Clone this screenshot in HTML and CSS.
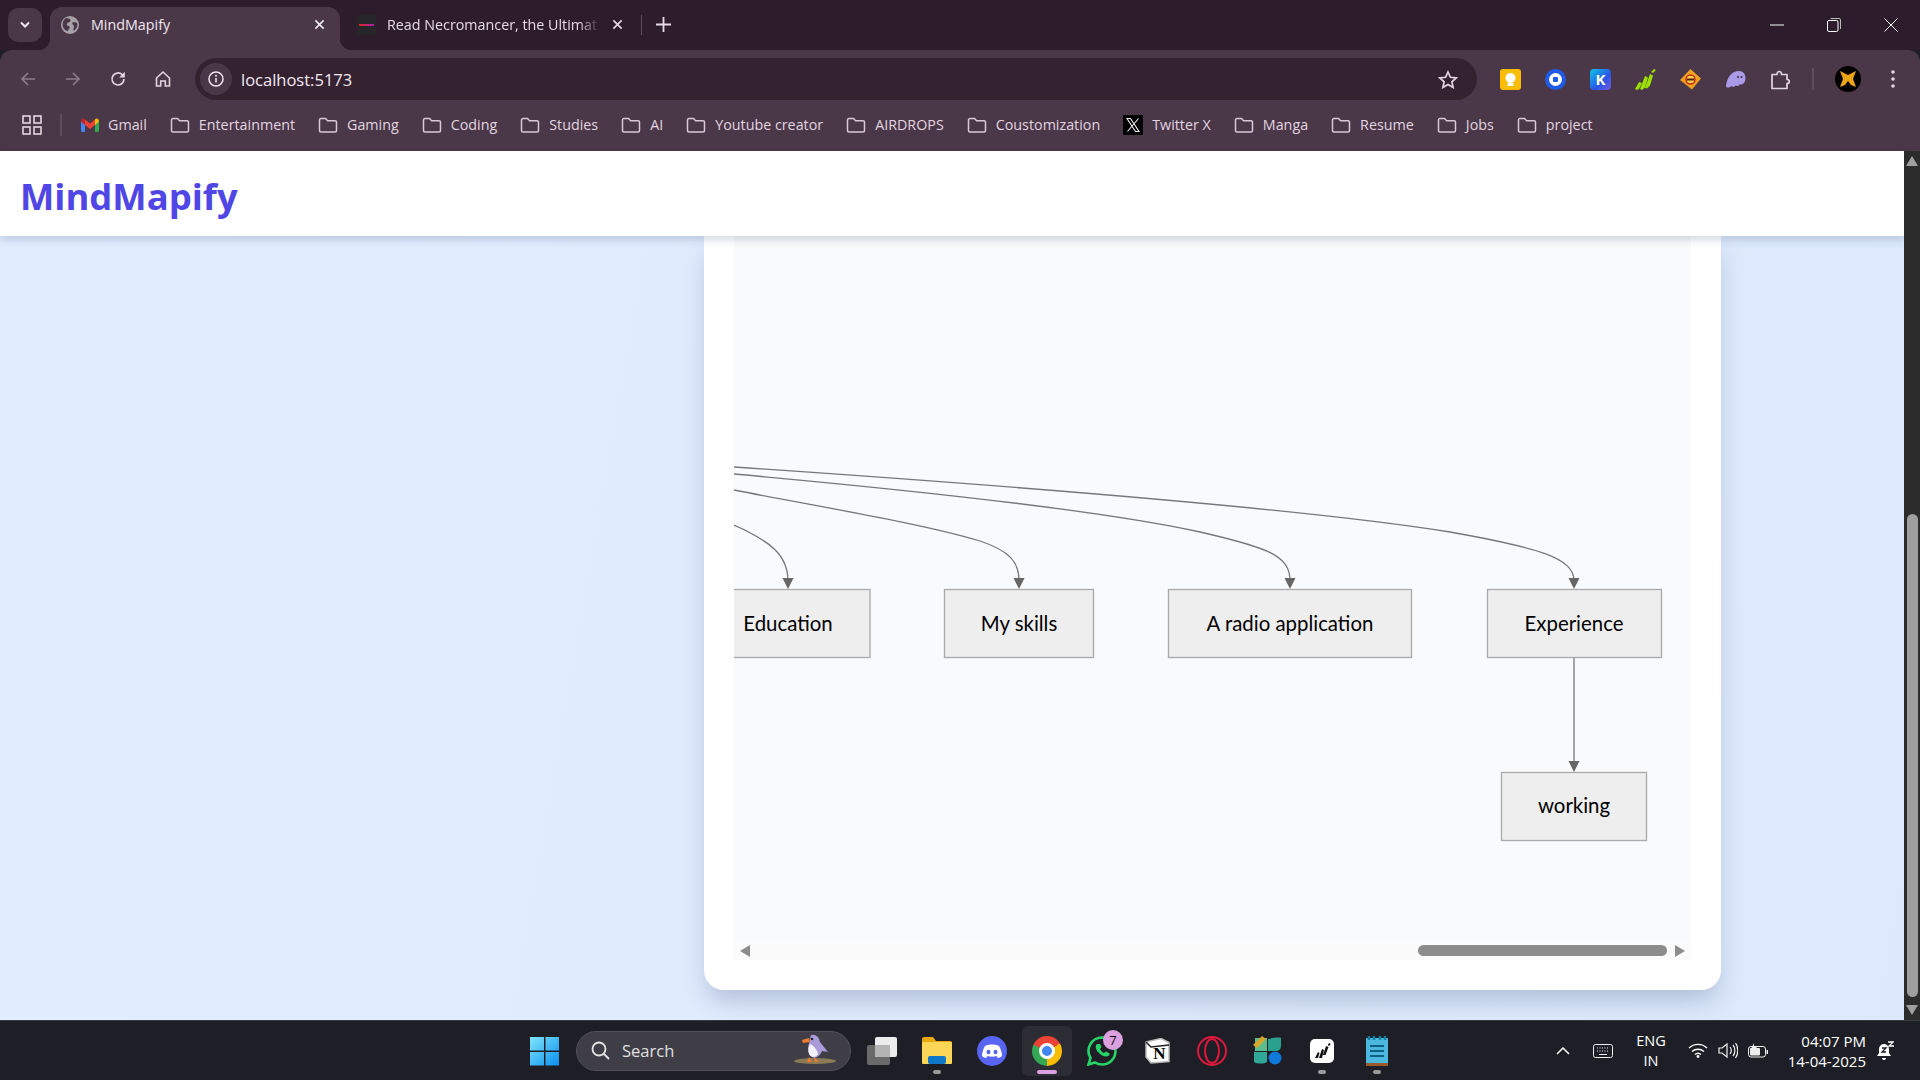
FILE: index.html
```html
<!DOCTYPE html>
<html lang="en">
<head>
  <meta charset="UTF-8">
  <meta name="viewport" content="width=device-width, initial-scale=1.0">
  <title>MindMapify</title>
  <link rel="stylesheet" href="styles.css">
</head>
<body>
  <svg class="sprite" aria-hidden="true">
    <symbol id="folder" viewBox="0 0 20 16">
      <path d="M1.5 3a1.5 1.5 0 0 1 1.5-1.5h4.6l2 2.2H17a1.5 1.5 0 0 1 1.5 1.5v8.3a1.5 1.5 0 0 1-1.5 1.5H3a1.5 1.5 0 0 1-1.5-1.5z" fill="none" stroke="#d9c8d6" stroke-width="1.5"/>
    </symbol>
  </svg>

  <div class="screen">
    <!-- tab strip -->
    <div class="tabstrip">
      <div class="tab-menu">
        <svg width="12" height="8" viewBox="0 0 12 8"><path d="M2 1.5l4 4 4-4" fill="none" stroke="#f1e6ef" stroke-width="2"/></svg>
      </div>
      <div class="tab tab-active">
        <svg class="tab-icon" width="18" height="18" viewBox="0 0 17 17"><circle cx="8.5" cy="8.5" r="8.5" fill="#a7a1a8"/><path d="M5 2c2 0 4 1 4 2.500S6 6 5.500 7.500 7 9 8 10s-1 3-2 4.500C3 13 1.500 11 1.500 8S3 3 5 2zM11 6c2-.5 3.500 0 4.500 1 .2 3-1 5.500-3.500 7-1-2 1-3.500 0-5s-2-2-1-3z" fill="#4a3748"/></svg>
        <span class="tab-title">MindMapify</span>
        <svg class="tab-close" width="11" height="11" viewBox="0 0 12 12"><path d="M1.500 1.500l9 9m0-9l-9 9" stroke="#f4ecf3" stroke-width="1.700"/></svg>
      </div>
      <div class="tab tab-idle">
        <span class="favicon-book"><i></i></span>
        <span class="tab-title tab-title-fade">Read Necromancer, the Ultimat</span>
        <svg class="tab-close" width="11" height="11" viewBox="0 0 12 12"><path d="M1.500 1.500l9 9m0-9l-9 9" stroke="#e6dae4" stroke-width="1.700"/></svg>
      </div>
      <span class="tab-sep"></span>
      <svg class="tab-new" width="15" height="15" viewBox="0 0 14 14"><path d="M7 0v14M0 7h14" stroke="#e6dae4" stroke-width="1.700"/></svg>
      <div class="win-buttons">
        <svg width="14" height="14" viewBox="0 0 14 14"><path d="M0 7h14" stroke="#fff" stroke-width="1"/></svg>
        <svg width="14" height="14" viewBox="0 0 14 14"><rect x=".5" y="2.500" width="10.500" height="11" rx="1.500" fill="none" stroke="#fff"/><path d="M3.500.5H12a1.500 1.500 0 0 1 1.500 1.500v9" fill="none" stroke="#bbb"/></svg>
        <svg width="14" height="14" viewBox="0 0 14 14"><path d="M.5.5l13 13m0-13l-13 13" stroke="#fff" stroke-width="1"/></svg>
      </div>
    </div>

    <!-- address bar -->
    <div class="toolbar">
      <div class="nav-icons">
        <svg width="18" height="18" viewBox="0 0 18 18"><path d="M16 9H3m6-6L3 9l6 6" fill="none" stroke="#8c7c8a" stroke-width="1.700"/></svg>
        <svg width="18" height="18" viewBox="0 0 18 18"><path d="M2 9h13M9 3l6 6-6 6" fill="none" stroke="#8c7c8a" stroke-width="1.700"/></svg>
        <svg width="18" height="18" viewBox="0 0 18 18"><path d="M15 9a6 6 0 1 1-1.800-4.300L15 6.500" fill="none" stroke="#e3d5e0" stroke-width="1.700"/><path d="M15.800 1.800v5.600h-5.600z" fill="#e3d5e0"/></svg>
        <svg width="18" height="18" viewBox="0 0 18 18"><path d="M2.500 8L9 2l6.500 6v8h-4.200v-5H6.700v5H2.500z" fill="none" stroke="#e3d5e0" stroke-width="1.600"/></svg>
      </div>
      <div class="omnibox">
        <span class="info-chip">
          <svg width="16" height="16" viewBox="0 0 16 16"><circle cx="8" cy="8" r="7" fill="none" stroke="#f0e4ee" stroke-width="1.500"/><path d="M8 7v4.500" stroke="#f0e4ee" stroke-width="1.600"/><circle cx="8" cy="4.700" r="1" fill="#f0e4ee"/></svg>
        </span>
        <span class="url">localhost:5173</span>
        <svg class="star" width="20" height="19" viewBox="0 0 20 19"><path d="M10 2l2.400 5.300 5.800.6-4.300 3.900 1.200 5.700L10 14.600l-5.100 2.900 1.200-5.700L1.800 7.900l5.800-.6z" fill="none" stroke="#e3d5e0" stroke-width="1.700"/></svg>
      </div>
      <div class="ext-icons">
        <svg width="21" height="21" viewBox="0 0 21 21"><rect width="21" height="21" rx="3" fill="#fbbc04"/><circle cx="10.500" cy="9" r="5" fill="#fff"/><rect x="7.500" y="14" width="6" height="3" fill="#fff"/></svg>
        <svg width="21" height="21" viewBox="0 0 21 21"><circle cx="10.500" cy="10.500" r="10.500" fill="#1f5ae8"/><circle cx="10.500" cy="10.500" r="6.500" fill="#fff"/><rect x="8" y="8" width="5" height="5" rx="1" fill="#1f5ae8"/></svg>
        <svg class="ext-k" width="21" height="21" viewBox="0 0 21 21"><defs><linearGradient id="kgrad" x1="0" y1="0" x2="1" y2="1"><stop offset="0" stop-color="#0bc5ea"/><stop offset=".6" stop-color="#2a55e5"/><stop offset="1" stop-color="#7a5ae0"/></linearGradient></defs><rect width="21" height="21" rx="4" fill="url(#kgrad)"/><text x="10.500" y="15.500" class="k-letter">K</text></svg>
        <svg width="21" height="21" viewBox="0 0 21 21"><path d="M0 20l4-7 3 1-3 6-2 1zM5 20l5-13 3 1.500-3 10-3 2.500zM10 19l5-14 3 1.500-3 10-3 3zM16 3l3-3 2 1-3 3z" fill="#9be000"/></svg>
        <svg width="21" height="21" viewBox="0 0 21 21"><path d="M10.500 0l10.500 9.500-9 11L0 11z" fill="#f0a21f"/><circle cx="10.500" cy="10.500" r="4.500" fill="#f9d24a" stroke="#c6281c" stroke-width="1.500"/><path d="M7 10.500h7" stroke="#521" stroke-width="2"/></svg>
        <svg width="21" height="21" viewBox="0 0 21 21"><path d="M1 17C2 8 7 2 14 2c4 0 6.500 3 6.500 7 0 5-3 7-6 6.500-1 2-3 1.500-4 1-1.500 2-3 1.500-4 .5-1.500 1.500-5 2.500-5.500.5z" fill="#ab9ae8"/><circle cx="13" cy="8" r="1.100" fill="#4a3748"/><circle cx="16.500" cy="8" r="1.100" fill="#4a3748"/></svg>
        <svg width="21" height="21" viewBox="0 0 21 21"><path d="M2 5.500h5c0-4 4.500-4 4.500 0h5.500v5c3 0 3 4 0 4v5H2z" fill="none" stroke="#e3d5e0" stroke-width="1.700" stroke-linejoin="round"/></svg>
        <span class="ext-sep"></span>
        <svg class="profile" width="26" height="26" viewBox="0 0 26 26"><circle cx="13" cy="13" r="13" fill="#000"/><path d="M5 5l8 4 8-4-3 8 3 8-5-2-3-4-3 4-5 2 3-8z" fill="#eda515"/></svg>
        <svg class="dots" width="4" height="18" viewBox="0 0 4 18"><circle cx="2" cy="2" r="1.800" fill="#e3d5e0"/><circle cx="2" cy="9" r="1.800" fill="#e3d5e0"/><circle cx="2" cy="16" r="1.800" fill="#e3d5e0"/></svg>
      </div>
    </div>

    <!-- bookmarks -->
    <div class="bookmarks">
      <svg class="bm-apps" width="20" height="20" viewBox="0 0 20 20"><g fill="none" stroke="#e3d5e0" stroke-width="1.600"><rect x="1" y="1" width="7" height="7"/><rect x="12" y="1" width="7" height="7"/><rect x="1" y="12" width="7" height="7"/><rect x="12" y="12" width="7" height="7"/></g></svg>
      <span class="bm-sep"></span>
      <div class="bm-list">
        <span class="bm"><svg width="18" height="14" viewBox="0 0 18 14"><path d="M0 3v9.500A1.500 1.500 0 0 0 1.500 14H4V6z" fill="#4285f4"/><path d="M14 6v8h2.500a1.500 1.500 0 0 0 1.500-1.500V3z" fill="#34a853"/><path d="M4 7V1.500L9 5.500l5-4V7L9 11z" fill="#ea4335"/><path d="M0 3.500C0 .8 2.500-.5 4 1.500V7z" fill="#c5221f"/><path d="M14 1.500c1.500-2 4-.7 4 2L14 7z" fill="#fbbc04"/></svg>Gmail</span>
        <span class="bm"><svg class="bm-folder"><use href="#folder"/></svg>Entertainment</span>
        <span class="bm"><svg class="bm-folder"><use href="#folder"/></svg>Gaming</span>
        <span class="bm"><svg class="bm-folder"><use href="#folder"/></svg>Coding</span>
        <span class="bm"><svg class="bm-folder"><use href="#folder"/></svg>Studies</span>
        <span class="bm"><svg class="bm-folder"><use href="#folder"/></svg>AI</span>
        <span class="bm"><svg class="bm-folder"><use href="#folder"/></svg>Youtube creator</span>
        <span class="bm"><svg class="bm-folder"><use href="#folder"/></svg>AIRDROPS</span>
        <span class="bm"><svg class="bm-folder"><use href="#folder"/></svg>Coustomization</span>
        <span class="bm"><svg width="20" height="20" viewBox="0 0 20 20"><rect width="20" height="20" fill="#000"/><path d="M4 3.500h3.500l8.500 13h-3.500zM15.500 3.500L4.500 16.500" fill="none" stroke="#eee" stroke-width="1.100"/></svg>Twitter X</span>
        <span class="bm"><svg class="bm-folder"><use href="#folder"/></svg>Manga</span>
        <span class="bm"><svg class="bm-folder"><use href="#folder"/></svg>Resume</span>
        <span class="bm"><svg class="bm-folder"><use href="#folder"/></svg>Jobs</span>
        <span class="bm"><svg class="bm-folder"><use href="#folder"/></svg>project</span>
      </div>
    </div>

    <!-- page -->
    <div class="viewport">
      <div class="page">
        <header class="site-header">
          <h1 class="logo">MindMapify</h1>
        </header>
        <main class="content">
          <section class="card">
            <div class="diagram-panel">
              <svg class="diagram" width="957" height="705" viewBox="734 236 957 705">
                <g class="edges">
                  <path d="M734 467C1000 485 1300 508 1450 532C1540 548 1574 558 1574 581"/>
                  <path d="M734 474C900 489 1100 510 1200 532C1270 548 1290 556 1290 581"/>
                  <path d="M734 490C820 507 920 523 980 541C1010 551 1019 562 1019 581"/>
                  <path d="M734 525C770 541 788 555 788 581"/>
                  <path d="M1574 658V764"/>
                </g>
                <g class="heads">
                  <path d="M782.500 578h11l-5.500 11z"/>
                  <path d="M1013.500 578h11l-5.500 11z"/>
                  <path d="M1284.500 578h11l-5.500 11z"/>
                  <path d="M1568.500 578h11l-5.500 11z"/>
                  <path d="M1568.500 761h11l-5.500 11z"/>
                </g>
                <g class="nodes">
                  <rect x="706" y="589.500" width="164" height="68"/>
                  <rect x="944.500" y="589.500" width="149" height="68"/>
                  <rect x="1168.500" y="589.500" width="243" height="68"/>
                  <rect x="1487.500" y="589.500" width="174" height="68"/>
                  <rect x="1501.500" y="772.500" width="145" height="68"/>
                </g>
                <g class="labels">
                  <text x="788" y="631">Education</text>
                  <text x="1019" y="631">My skills</text>
                  <text x="1290" y="631">A radio application</text>
                  <text x="1574" y="631">Experience</text>
                  <text x="1574" y="813">working</text>
                </g>
              </svg>
            </div>
            <div class="hscroll">
              <span class="arrow-left"></span>
              <span class="hthumb"></span>
              <span class="arrow-right"></span>
            </div>
          </section>
        </main>
      </div>
      <div class="vscroll">
        <span class="arrow-up"></span>
        <span class="vthumb"></span>
        <span class="arrow-down"></span>
      </div>
    </div>

    <!-- windows taskbar -->
    <footer class="taskbar">
      <div class="task-center">
        <span class="slot"><svg width="30" height="30" viewBox="0 0 30 30"><defs><linearGradient id="wingrad" x1="0" y1="0" x2="1" y2="1"><stop offset="0" stop-color="#7fe6fb"/><stop offset="1" stop-color="#0a8ff0"/></linearGradient></defs><path d="M0 1h14v13.500H0zM15.500 1H29v13.500H15.500zM0 16h14v13.500H0zM15.500 16H29v13.500H15.500z" fill="url(#wingrad)"/></svg></span>
        <div class="search-pill">
          <svg width="19" height="19" viewBox="0 0 19 19"><circle cx="8" cy="8" r="6.500" fill="none" stroke="#e5e5e5" stroke-width="1.800"/><path d="M13 13l5 5" stroke="#e5e5e5" stroke-width="1.800"/></svg>
          <span class="search-label">Search</span>
          <svg class="search-bird" width="42" height="32" viewBox="0 0 42 32"><ellipse cx="21" cy="28" rx="21" ry="3" fill="#8b7a55"/><path d="M17 2c5-1 8 2 9 7l8 10-6-1c-2 5-6 8-10 6-5-3-4-10-3-14z" fill="#a99ad8"/><path d="M16 11c3 1 7 5 8 10-2 4-7 4-9 0-1-3-1-7 1-10z" fill="#f2f0f8"/><circle cx="18" cy="6" r="1.200" fill="#222"/><path d="M15 5L8 7l1 3 7-1z" fill="#ee7b2c"/><path d="M15 24l-2 5h5zM20 24l1 5h4z" fill="#ee7b2c"/></svg>
        </div>
        <span class="slot"><svg width="30" height="28" viewBox="0 0 30 28"><rect y="8" width="23" height="20" rx="2" fill="#6a6a6a"/><rect x="8" width="22" height="20" rx="2" fill="#ececec"/><rect x="8" y="8" width="15" height="12" fill="#b4b4b4"/></svg></span>
        <span class="slot slot-running"><svg width="30" height="27" viewBox="0 0 30 27"><path d="M0 2a2 2 0 0 1 2-2h9l3 4h14a2 2 0 0 1 2 2v4H0z" fill="#e8a90f"/><rect y="5" width="30" height="22" rx="1" fill="#fcd757"/><rect x="6" y="19" width="18" height="8" rx="2" fill="#0f78c8"/></svg></span>
        <span class="slot"><svg width="30" height="30" viewBox="0 0 30 30"><circle cx="15" cy="15" r="15" fill="#5865f2"/><path d="M8 10c4-2 10-2 14 0 2 3 3 7 3 10-2 1.500-3 2-4 2l-1.500-2c-3 1-6 1-9 0L9 22c-1 0-2-.5-4-2 0-3 1-7 3-10z" fill="#fff"/><ellipse cx="11.500" cy="16" rx="2" ry="2.300" fill="#5865f2"/><ellipse cx="18.500" cy="16" rx="2" ry="2.300" fill="#5865f2"/></svg></span>
        <span class="slot slot-active">
          <span class="chrome-logo"><i></i></span>
        </span>
        <span class="slot slot-badge">
          <svg width="30" height="30" viewBox="0 0 30 30"><path d="M15 1.500a13.500 13.500 0 0 1 0 27c-2.500 0-5-.7-7-2L1.500 28.500 3.500 22A13.500 13.500 0 0 1 15 1.500z" fill="none" stroke="#25d366" stroke-width="2.600"/><path d="M10 8c-2 2-1.500 5 1 8s6 5 9 4.500c2-.5 3-2 2.500-3L19 15.500l-2 1.500c-1.500-.5-3.500-2.500-4-4l1.500-2L13 8z" fill="#25d366"/></svg>
          <span class="badge">7</span>
        </span>
        <span class="slot"><svg width="25" height="26" viewBox="0 0 25 26"><path d="M1 4l15-3.500 8 4v19L6 25 1 19z" fill="#fff" stroke="#bbb" stroke-width="1.500"/><path d="M1 4l5 5 18-2" fill="none" stroke="#222" stroke-width="1.500"/><text x="14.500" y="21" class="notion-letter">N</text></svg></span>
        <span class="slot"><svg width="30" height="30" viewBox="0 0 30 30"><ellipse cx="15" cy="15" rx="14" ry="14" fill="none" stroke="#e0183c" stroke-width="2"/><ellipse cx="15" cy="15" rx="7" ry="12" fill="none" stroke="#e0183c" stroke-width="2"/></svg></span>
        <span class="slot"><svg width="29" height="29" viewBox="0 0 29 29"><path d="M2 2h12v13H2z" fill="#5bbd8e"/><path d="M15 3c4-1 12-2 13-1v8c0 3-2 5-5 5h-8z" fill="#2aa08f"/><path d="M1 16h13v10c-3 2-10 2-13 0z" fill="#30a898"/><circle cx="22" cy="22" r="6.500" fill="#0f78d8"/><path d="M0 9L9 0l4 3-9 9z" fill="#d6a72c"/></svg></span>
        <span class="slot slot-running"><svg width="24" height="24" viewBox="0 0 24 24"><rect width="24" height="24" rx="5" fill="#fff"/><path d="M5 19l3-6 1.500 1L8 19zM9 19l3-9 2 1-2 8zM13 16l3-9 2.500 1-3 8zM18 5l2-1 .5 2-2 1z" fill="#111"/></svg></span>
        <span class="slot slot-running"><svg width="22" height="30" viewBox="0 0 22 30"><rect y="2" width="22" height="28" rx="1" fill="#4db8dd"/><rect y="27" width="22" height="3" fill="#9a5a2a"/><path d="M4 10h14M4 15h14M4 20h14" stroke="#0e5f86" stroke-width="2"/><path d="M3 0v4M8 0v4M14 0v4M19 0v4" stroke="#127fa5" stroke-width="2.400"/></svg></span>
      </div>
      <div class="tray">
        <svg width="14" height="8" viewBox="0 0 14 8"><path d="M1 7l6-6 6 6" fill="none" stroke="#fff" stroke-width="1.500"/></svg>
        <svg class="tray-kb" width="20" height="14" viewBox="0 0 20 14"><rect x=".5" y=".5" width="19" height="13" rx="2" fill="none" stroke="#eee"/><path d="M4 4h12M4 7h12" stroke="#eee" stroke-dasharray="1 1.500"/><path d="M6 10.500h8" stroke="#eee"/></svg>
        <div class="tray-lang"><span>ENG</span><span>IN</span></div>
        <svg class="tray-wifi" width="20" height="15" viewBox="0 0 20 15"><path d="M1 5a13 13 0 0 1 18 0M4 8.500a9 9 0 0 1 12 0M7 11.500a4.500 4.500 0 0 1 6 0" fill="none" stroke="#fff" stroke-width="1.400"/><circle cx="10" cy="13.500" r="1.400" fill="#fff"/></svg>
        <svg class="tray-vol" width="20" height="17" viewBox="0 0 20 17"><path d="M1 6v5h3l5 4V2L4 6z" fill="none" stroke="#eee" stroke-width="1.200"/><path d="M12 5c1.500 2 1.500 5 0 7M15 3c2.500 3 2.500 8 0 11M17.500 1c3 4 3 11 0 15" fill="none" stroke="#eee" stroke-width="1.200"/></svg>
        <svg class="tray-bat" width="20" height="15" viewBox="0 0 20 15"><rect x=".5" y="3.500" width="17" height="10.500" rx="2.500" fill="none" stroke="#eee"/><rect x="2" y="5" width="10" height="7.500" rx="1" fill="#eee"/><rect x="18.500" y="7" width="1.500" height="4" fill="#eee"/><path d="M6 0L3 6h3l-1 4 4-6H6z" fill="#eee"/></svg>
        <div class="tray-clock"><span>04:07 PM</span><span>14-04-2025</span></div>
        <svg class="tray-bell" width="17" height="20" viewBox="0 0 17 20"><path d="M7 3a5 5 0 0 0-5 5v4l-2 3h14l-2-3V8a5 5 0 0 0-5-5z" fill="#fff"/><path d="M5 17h4a2 2 0 0 1-4 0z" fill="#fff"/><path d="M11 1h5l-4 4h5" fill="none" stroke="#fff" stroke-width="1.300"/><path d="M5 7h4l-4 4h4" fill="none" stroke="#1e1f26" stroke-width="1.300"/></svg>
      </div>
    </footer>
  </div>
</body>
</html>
```

FILE: styles.css
```css
* { box-sizing: border-box; }
html, body { margin: 0; height: 100%; overflow: hidden; }
body { font-family: "Open Sans", "Noto Sans", sans-serif; }
.sprite { display: none; }
.screen { width: 1920px; height: 1080px; display: flex; flex-direction: column; background: #1e1f26; }

/* tab strip */
.tabstrip { height: 50px; flex: none; display: flex; align-items: flex-end; background: #2d1c2c; padding-left: 8px; color: #f1e6ef; font-size: 14.3px; }
.tab-menu { width: 34px; height: 34px; margin-bottom: 8px; border-radius: 10px; background: #4a3748; display: flex; align-items: center; justify-content: center; }
.tab { height: 43px; display: flex; align-items: center; position: relative; padding-bottom: 8px; }
.tab-active { width: 290px; margin-left: 8px; padding-left: 11px; padding-right: 15px; background: #4a3748; border-radius: 12px 12px 0 0; }
.tab-active::before, .tab-active::after { content: ""; position: absolute; bottom: 0; width: 12px; height: 12px; }
.tab-active::before { left: -12px; background: radial-gradient(circle at 0 0, #2d1c2c 12px, #4a3748 12.5px); }
.tab-active::after { right: -12px; background: radial-gradient(circle at 100% 0, #2d1c2c 12px, #4a3748 12.5px); }
.tab-icon { flex: none; margin-right: 12px; }
.tab-title { white-space: nowrap; flex: 1; min-width: 0; }
.tab-close { flex: none; }
.tab-idle { width: 295px; padding-left: 17px; padding-right: 12px; color: #e6dae4; }
.tab-title-fade { -webkit-mask-image: linear-gradient(90deg, #000 90%, transparent); mask-image: linear-gradient(90deg, #000 90%, transparent); margin-right: 12px; }
.favicon-book { flex: none; width: 19px; height: 20px; margin-right: 11px; background: #26262a; display: flex; align-items: center; justify-content: center; }
.favicon-book i { width: 15px; height: 2px; background: linear-gradient(90deg, #d22, #a2a); }
.tab-sep { width: 1px; height: 20px; background: #5f4c5d; margin: 0 0 15px 6px; }
.tab-new { margin: 0 0 18px 14px; }
.win-buttons { margin-left: auto; height: 50px; display: flex; align-items: center; gap: 43px; padding-right: 22px; }

/* toolbar */
.toolbar { height: 50px; flex: none; display: flex; align-items: flex-start; background: #4a3748; border-radius: 12px 12px 0 0; padding-top: 8px; }
.nav-icons { width: 195px; height: 42px; display: flex; align-items: center; gap: 27px; padding-left: 19px; }
.omnibox { width: 1282px; height: 42px; border-radius: 21px; background: #342231; display: flex; align-items: center; padding: 0 19px 0 5px; color: #f3e9f1; }
.info-chip { width: 32px; height: 32px; border-radius: 50%; background: #4a3748; display: flex; align-items: center; justify-content: center; margin-right: 9px; }
.url { font-size: 16.5px; flex: 1; }
.ext-icons { flex: 1; height: 42px; display: flex; align-items: center; gap: 24px; padding-left: 23px; }
.k-letter { font-family: "Open Sans", sans-serif; font-size: 15px; font-weight: 700; fill: #fff; text-anchor: middle; }
.ext-sep { width: 2px; height: 22px; background: #5f4c5d; margin: 0 -3px; }
.dots { margin-left: 6px; }

/* bookmarks */
.bookmarks { height: 51px; flex: none; display: flex; align-items: center; background: #4a3748; color: #e3d5e0; font-size: 14.3px; padding: 0 0 2px 22px; }
.bm-sep { width: 2px; height: 22px; background: #5f4c5d; margin: 0 19px 0 18px; }
.bm-list { display: flex; align-items: center; gap: 23px; }
.bm { display: flex; align-items: center; gap: 9px; white-space: nowrap; }
.bm-folder { width: 20px; height: 16px; }

/* page */
.viewport { flex: 1; min-height: 0; display: flex; }
.page { flex: 1; min-width: 0; display: flex; flex-direction: column; background: linear-gradient(100deg, #e2edff, #dce9fc); }
.site-header { height: 85px; flex: none; background: #fff; display: flex; align-items: center; padding: 4px 0 0 20px; box-shadow: 0 4px 8px rgba(30, 50, 90, .18); position: relative; z-index: 2; }
.logo { margin: 0; font-size: 36.4px; font-weight: 700; color: #4f46e5; font-family: "Open Sans", sans-serif; }
.content { flex: 1; min-height: 0; display: flex; padding-left: 704px; }
.card { width: 1017px; height: 754px; background: #fff; border-radius: 0 0 20px 20px; box-shadow: 0 14px 24px -4px rgba(40, 60, 100, .25); padding: 0 30px; display: flex; flex-direction: column; }
.diagram-panel { height: 705px; flex: none; background: #f9fafb; }
.diagram { display: block; }
.edges path { fill: none; stroke: #777; stroke-width: 1.3; }
.heads path { fill: #666; }
.nodes rect { fill: #eee; stroke: #aaa; stroke-width: 1.3; }
.labels text { font-family: Lato, "Open Sans", sans-serif; font-size: 20.4px; font-weight: 400; text-anchor: middle; fill: #000; }

/* horizontal scrollbar of the diagram */
.hscroll { height: 19px; flex: none; background: #fbfbfb; display: flex; align-items: center; padding: 0 6px; }
.hthumb { width: 250px; height: 11px; border-radius: 6px; background: #8c8c8c; margin-left: 668px; }
.arrow-left { width: 0; height: 0; border: 6.5px solid transparent; border-left: 0; border-right: 10px solid #8c8c8c; }
.arrow-right { width: 0; height: 0; border: 6.5px solid transparent; border-right: 0; border-left: 10px solid #8c8c8c; margin-left: 8px; }

/* page scrollbar */
.vscroll { width: 16px; flex: none; background: #2c2c2c; display: flex; flex-direction: column; align-items: center; padding-top: 5px; position: relative; z-index: 3; }
.vthumb { width: 11px; height: 483px; border-radius: 6px; background: #9f9f9f; margin-top: 348px; }
.arrow-up { width: 0; height: 0; border: 6px solid transparent; border-top: 0; border-bottom: 10px solid #9f9f9f; }
.arrow-down { width: 0; height: 0; border: 6px solid transparent; border-bottom: 0; border-top: 10px solid #9f9f9f; margin-top: 8px; }

/* taskbar */
.taskbar { height: 60px; flex: none; display: flex; align-items: center; background: #1e1f26; border-top: 1px solid #3a3b42; position: relative; color: #fff; }
.task-center { display: flex; align-items: center; gap: 5px; margin-left: 520px; }
.slot { width: 50px; height: 50px; border-radius: 6px; display: flex; align-items: center; justify-content: center; position: relative; }
.slot-running::after { content: ""; position: absolute; bottom: 2px; left: 21px; width: 8px; height: 4px; border-radius: 2px; background: #9a9a9a; }
.slot-active { background: #2c2d34; }
.slot-active::after { content: ""; position: absolute; bottom: 2px; left: 15px; width: 20px; height: 4px; border-radius: 2px; background: #dba0e0; }
.chrome-logo { width: 30px; height: 30px; border-radius: 50%; background: conic-gradient(from -65deg, #ea4335 0 125deg, #fbbc04 125deg 245deg, #34a853 245deg 360deg); display: flex; align-items: center; justify-content: center; }
.chrome-logo i { width: 16px; height: 16px; border-radius: 50%; background: #4285f4; border: 3px solid #fff; }
.badge { position: absolute; top: 4px; right: 4px; width: 20px; height: 20px; border-radius: 50%; background: #dba0e0; color: #111; font-size: 13px; display: flex; align-items: center; justify-content: center; }
.notion-letter { font-family: "Liberation Serif", serif; font-size: 17px; font-weight: 700; text-anchor: middle; fill: #000; }
.search-pill { width: 275px; height: 40px; margin: 0 1px; border-radius: 20px; background: #3f3e47; border: 1px solid #50505a; display: flex; align-items: center; padding: 0 14px; color: #e0e0e0; font-size: 16.5px; }
.search-label { flex: 1; margin-left: 12px; }
.search-bird { margin-bottom: 3px; }
.tray { margin-left: 154px; flex: none; display: flex; align-items: center; font-size: 14.5px; }
.tray-kb { margin-left: 23px; }
.tray-lang { width: 38px; margin-left: 19px; display: flex; flex-direction: column; align-items: center; line-height: 20px; }
.tray-wifi { margin-left: 18px; }
.tray-vol { margin-left: 10px; }
.tray-bat { margin-left: 10px; }
.tray-clock { width: 98px; display: flex; flex-direction: column; align-items: flex-end; line-height: 20px; font-size: 15px; }
.tray-bell { margin-left: 11px; }
```
